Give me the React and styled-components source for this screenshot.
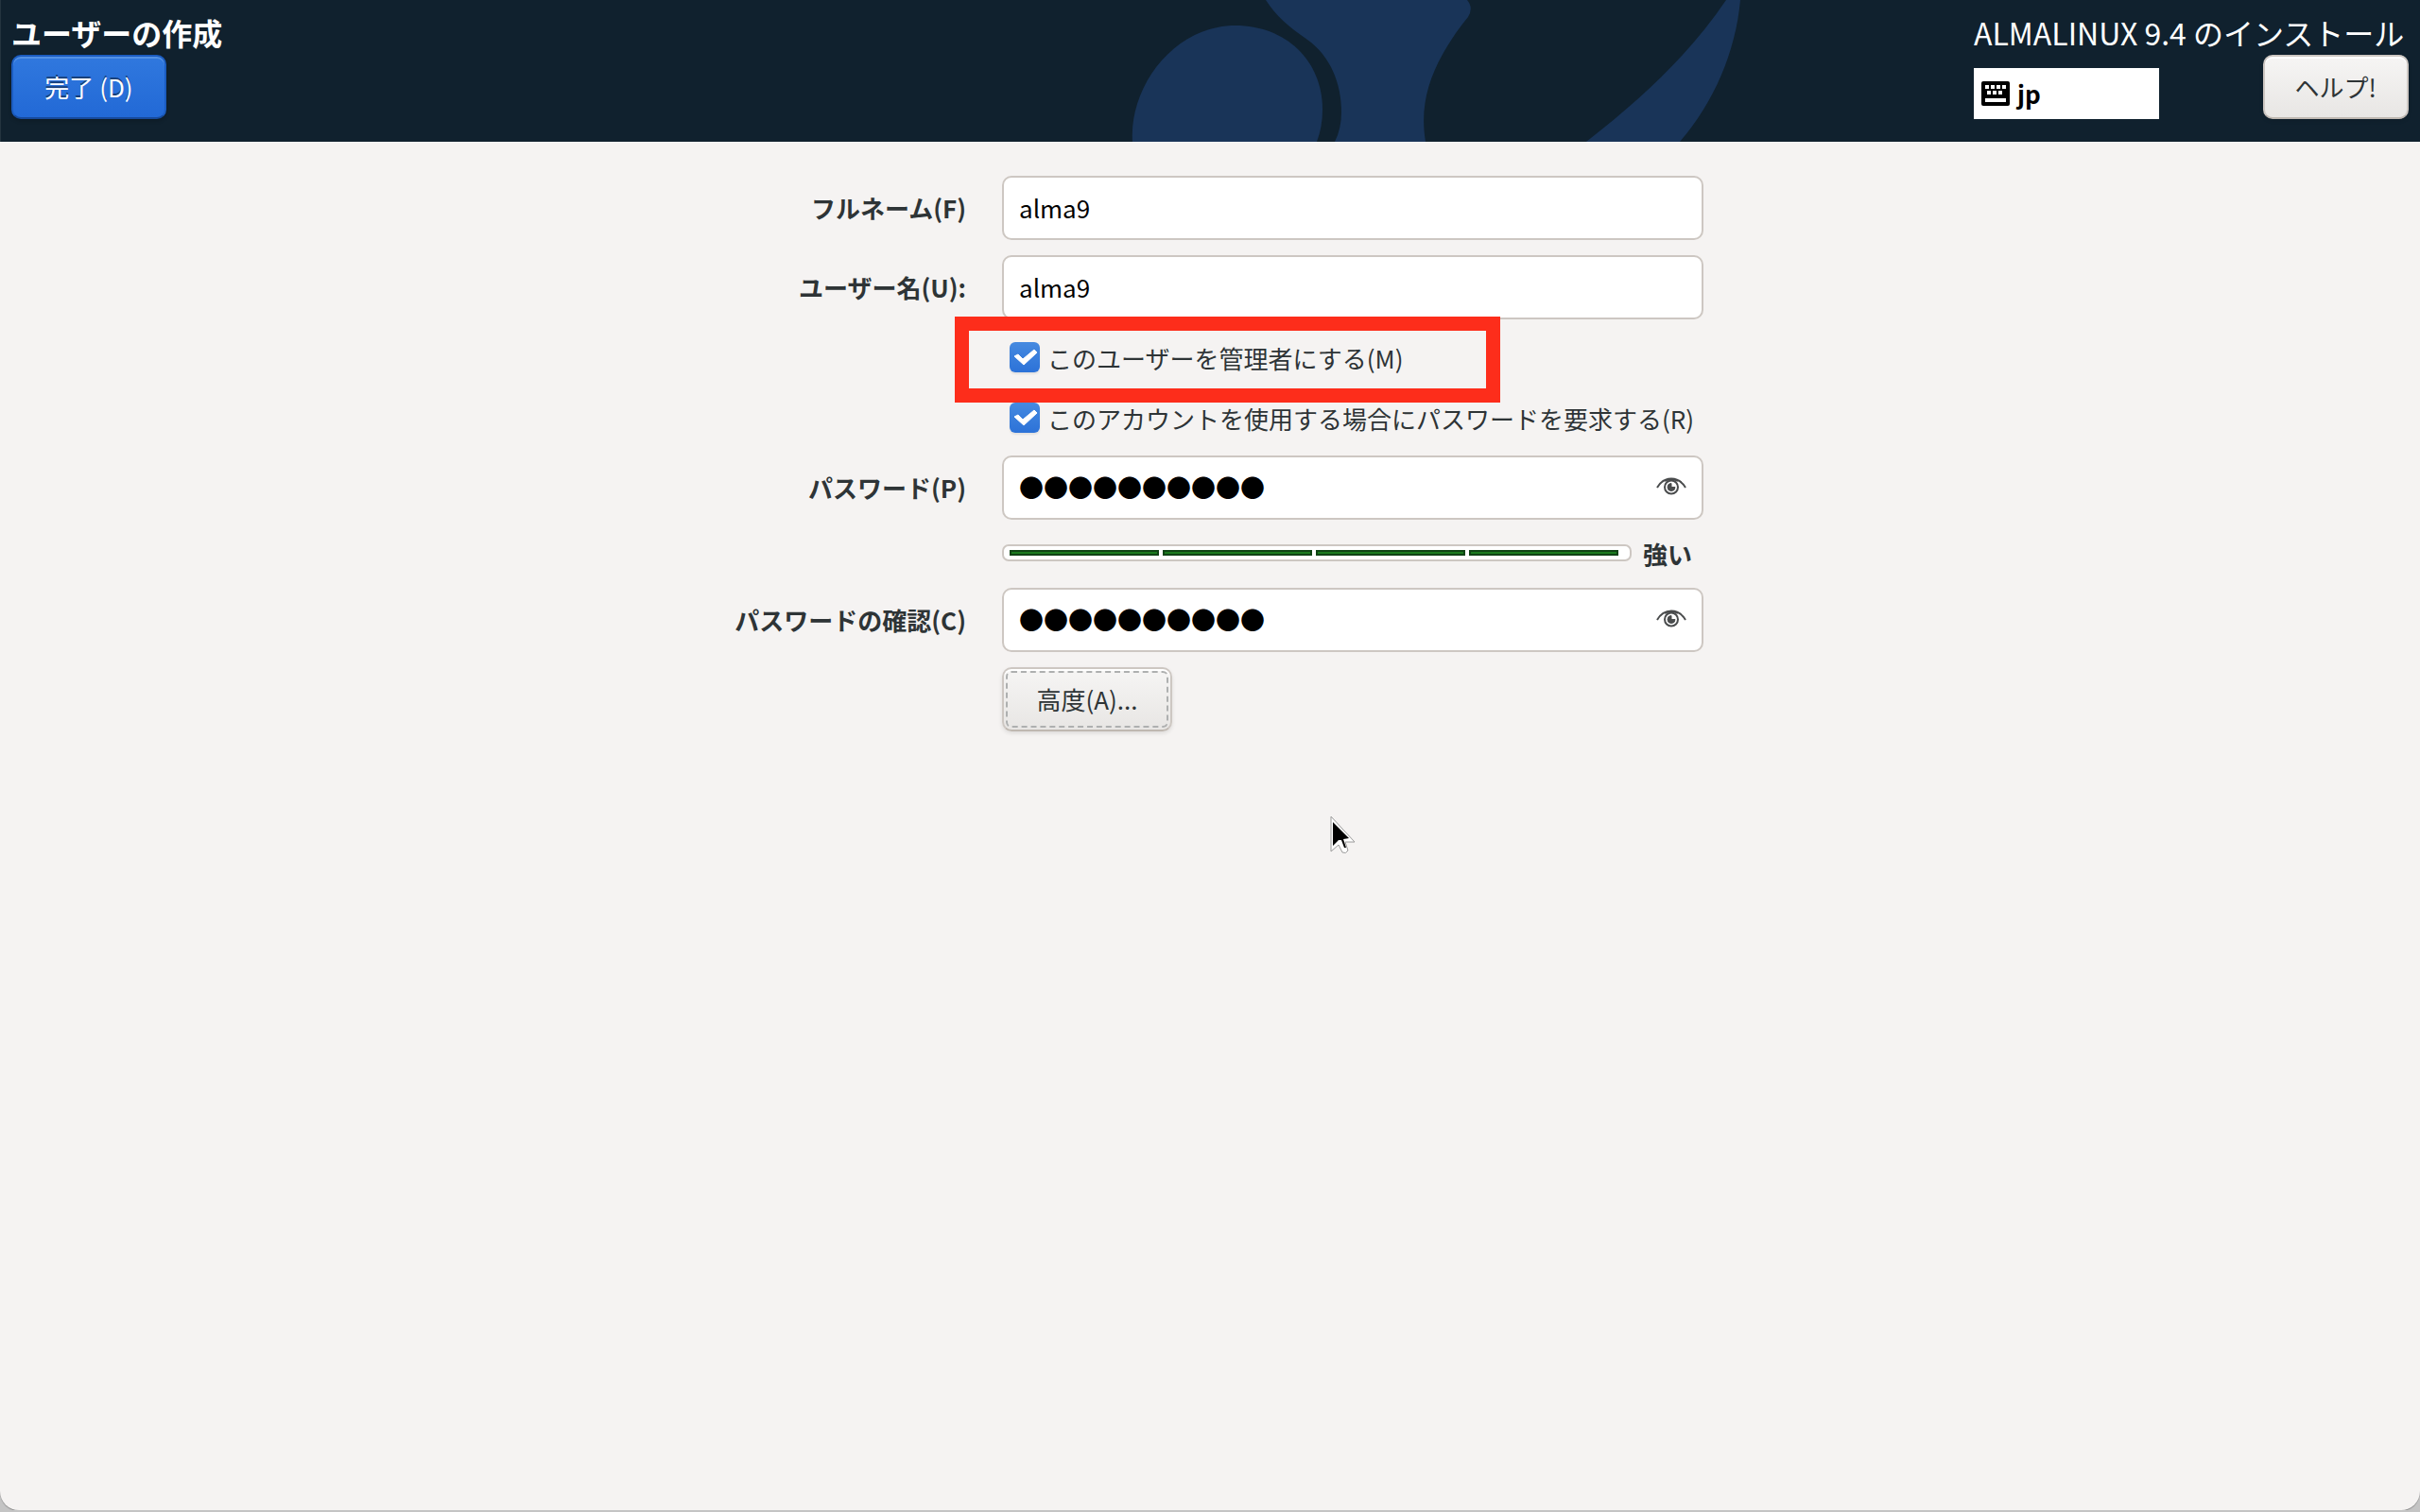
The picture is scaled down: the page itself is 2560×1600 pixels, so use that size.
import { useState } from "react";
import styled, { createGlobalStyle } from "styled-components";

const GlobalStyle = createGlobalStyle`
  * {
    box-sizing: border-box;
  }
  body {
    margin: 0;
    background: #c4c4c4;
    color: #2e3436;
    font-family: "Noto Sans CJK JP", "Noto Sans", sans-serif;
    font-size: 26px;
    line-height: 36px;
  }
`;

const EyeIcon = () => (
  <svg width="32" height="20" viewBox="0 0 32 20" fill="none" stroke="#4a4c4d">
    <path d="M1 11C5 4 10 1.500 16 1.500S27 4 31 11" strokeWidth="2" />
    <path d="M9 4Q16 0 23 4" strokeWidth="2" />
    <circle cx="16" cy="10.500" r="7" strokeWidth="2" />
    <path d="M16 6.500v4h4a4 4 0 1 1-4-4z" fill="#4a4c4d" strokeWidth="1" />
  </svg>
);

const KeyboardIcon = () => (
  <svg width="30" height="26" viewBox="0 0 30 26">
    <rect width="30" height="26" rx="2" fill="#000" />
    <path
      fill="#fff"
      d="M4 4h4v4H4zM10 4h4v4h-4zM16 4h4v4h-4zM22 4h4v4h-4zM6 10h4v4H6zM12 10h4v4h-4zM18 10h4v4h-4zM4 18h22v4H4z"
    />
  </svg>
);

const PasswordField = ({ id, label }) => {
  const [value, setValue] = useState("●●●●●●●●●●");
  return (
    <>
      <Label htmlFor={id}>{label}</Label>
      <PasswordBox>
        <PasswordInput
          id={id}
          value={value}
          autoComplete="off"
          onChange={(e) => setValue("●".repeat(e.target.value.length))}
        />
        <EyeButton type="button" aria-label="パスワードを表示">
          <EyeIcon />
        </EyeButton>
      </PasswordBox>
    </>
  );
};

const App = () => {
  return (
    <Window>
      <GlobalStyle />
      <Header>
        <HeaderArt viewBox="0 0 720 150" aria-hidden="true">
          <path d="M38 150C34 92 82 27 147 27C200 27 239 64 239 116Q239 134 233 150Z" />
          <path d="M179 0C189 16 204 29 223 42C247 59 259 88 259 119Q259 136 252 150H348C341 108 354 73 380 35Q388 24 393 18Q399 8 392 0Z" />
          <path d="M666 0H681C676 56 652 110 617 150H518C580 102 628 56 666 0Z" />
        </HeaderArt>
        <HeaderLeft>
          <Title>ユーザーの作成</Title>
          <DoneButton type="button">完了 (D)</DoneButton>
        </HeaderLeft>
        <HeaderRight>
          <Product>ALMALINUX 9.4 のインストール</Product>
          <HeaderTools>
            <Layout>
              <KeyboardIcon />
              jp
            </Layout>
            <Button type="button">ヘルプ!</Button>
          </HeaderTools>
        </HeaderRight>
      </Header>
      <Form>
        <Label htmlFor="fullname">フルネーム(F)</Label>
        <Input id="fullname" defaultValue="alma9" />
        <Label htmlFor="username">ユーザー名(U):</Label>
        <Input id="username" defaultValue="alma9" />
        <CheckRow>
          <Checkbox id="admin" type="checkbox" defaultChecked />
          <CheckLabel htmlFor="admin">このユーザーを管理者にする(M)</CheckLabel>
          <Highlight />
        </CheckRow>
        <CheckRow>
          <Checkbox id="require" type="checkbox" defaultChecked />
          <CheckLabel htmlFor="require">
            このアカウントを使用する場合にパスワードを要求する(R)
          </CheckLabel>
        </CheckRow>
        <PasswordField id="password" label="パスワード(P)" />
        <StrengthRow>
          <Level>
            <LevelBlock />
            <LevelBlock />
            <LevelBlock />
            <LevelBlock />
          </Level>
          <strong>強い</strong>
        </StrengthRow>
        <PasswordField id="confirm" label="パスワードの確認(C)" />
        <AdvancedButton type="button">高度(A)...</AdvancedButton>
      </Form>
      <Pointer viewBox="0 0 28 42" aria-hidden="true">
        <path
          d="M1 1V38L9 31L13 39Q17 41 19 37L16 28H26Z"
          fill="#fff"
          stroke="#9a9a9a"
          strokeWidth="1"
        />
        <path d="M3 7V32L9 26L12 26L15 34L17 34L14 25L20 24Z" fill="#000" />
      </Pointer>
    </Window>
  );
};

const Window = styled.div`
  min-height: calc(100vh - 2px);
  position: relative;
  overflow: hidden;
  background: #f5f3f2;
  border-radius: 0 0 20px 20px;
  box-shadow: 0 1px 1px #8c8c8c;
`;

const Header = styled.header`
  position: relative;
  display: flex;
  justify-content: space-between;
  height: 150px;
  padding: 12px 12px 24px 11px;
  background: #10212e;
  border-left: 1px solid #24343f;
  color: #fff;
`;

const HeaderArt = styled.svg`
  position: absolute;
  top: 0;
  left: calc(50% - 121px);
  width: 720px;
  height: 150px;
  fill: #193458;
`;

const HeaderLeft = styled.div`
  display: flex;
  flex-direction: column;
  align-items: flex-start;
  justify-content: space-between;
`;

const HeaderRight = styled(HeaderLeft)`
  align-items: stretch;
  min-width: 460px;
`;

const Title = styled.h1`
  margin: 0;
  font-size: 32px;
  line-height: 44px;
  font-weight: 700;
`;

const Product = styled.div`
  font-size: 32px;
  line-height: 44px;
`;

const HeaderTools = styled.div`
  display: flex;
  justify-content: space-between;
  align-items: flex-end;
`;

const Layout = styled.div`
  display: flex;
  align-items: center;
  gap: 8px;
  width: 196px;
  height: 54px;
  padding: 0 8px;
  background: #fff;
  color: #000;
  font-weight: 700;
`;

const Button = styled.button`
  height: 68px;
  padding: 0 32px;
  border: 2px solid #cdc7c2;
  border-bottom-color: #bfb8b1;
  border-radius: 10px;
  background: linear-gradient(#f6f5f4, #e8e6e4);
  box-shadow: inset 0 2px #fff, 0 2px 4px rgba(0, 0, 0, 0.1);
  color: #2e3436;
  font: inherit;
`;

const DoneButton = styled(Button)`
  min-width: 164px;
  border-color: #1b5cc0;
  border-bottom-color: #164a9c;
  background: linear-gradient(#3078de, #2269d6);
  box-shadow: inset 0 2px #5391e4, 0 2px 4px rgba(0, 0, 0, 0.2);
  color: #fff;
  text-shadow: 0 -2px rgba(0, 0, 0, 0.45);
`;

const AdvancedButton = styled(Button)`
  grid-column: 2;
  justify-self: start;
  min-width: 180px;
  outline: 2px dashed #aeb0b0;
  outline-offset: -6px;
`;

const Form = styled.form`
  display: grid;
  grid-template-columns: 264px 742px;
  justify-content: center;
  align-items: center;
  gap: 16px 38px;
  padding: 36px 24px;
`;

const Label = styled.label`
  text-align: right;
  font-weight: 700;
`;

const Input = styled.input`
  width: 100%;
  height: 68px;
  padding: 0 16px 2px;
  border: 2px solid #cdc7c2;
  border-radius: 10px;
  outline: none;
  background: #fff;
  color: #000;
  font: inherit;
`;

const PasswordBox = styled.div`
  display: flex;
  align-items: center;
  height: 68px;
  padding: 0 16px 2px;
  border: 2px solid #cdc7c2;
  border-radius: 10px;
  background: #fff;
`;

const PasswordInput = styled.input`
  flex: 1;
  min-width: 0;
  padding: 0;
  border: 0;
  outline: none;
  background: none;
  color: #000;
  font: inherit;
`;

const EyeButton = styled.button`
  display: flex;
  padding: 0;
  border: 0;
  background: none;
`;

const CheckRow = styled.div`
  grid-column: 2;
  position: relative;
  display: flex;
  align-items: center;
  gap: 8px;
  height: 48px;
  padding-left: 8px;
`;

const CheckLabel = styled.label`
  padding-top: 2px;
`;

const Checkbox = styled.input`
  appearance: none;
  width: 32px;
  height: 32px;
  margin: 0;
  border-radius: 6px;
  box-shadow: 0 2px 2px rgba(0, 0, 0, 0.08);
  background: linear-gradient(#468ae0, #2c72d8);

  &:checked {
    background: url("data:image/svg+xml,%3Csvg xmlns='http://www.w3.org/2000/svg' viewBox='0 0 32 32'%3E%3Cpath d='M5 15L9 13L14 18L26 8L29 11L15 24Z' fill='white' stroke='white' stroke-linejoin='round'/%3E%3C/svg%3E"),
      linear-gradient(#468ae0, #2c72d8);
  }
`;

const Highlight = styled.span`
  position: absolute;
  top: -19px;
  bottom: -24px;
  left: -50px;
  width: 577px;
  border: 15px solid #fd2d1b;
  pointer-events: none;
`;

const StrengthRow = styled.div`
  grid-column: 2;
  display: flex;
  align-items: center;
  gap: 12px;
  height: 40px;
  padding-right: 12px;
`;

const Level = styled.div`
  flex: 1;
  display: flex;
  gap: 4px;
  padding: 4px 12px 4px 6px;
  margin-bottom: 2px;
  border: 2px solid #cdc7c2;
  border-radius: 7px;
  background: #fff;
`;

const LevelBlock = styled.span`
  flex: 1;
  height: 6px;
  border: 2px solid #0f4314;
  background: #1b7a1e;
`;

const Pointer = styled.svg`
  position: absolute;
  top: 863px;
  left: calc(50% + 127px);
  width: 28px;
  height: 42px;
`;

export default App;
